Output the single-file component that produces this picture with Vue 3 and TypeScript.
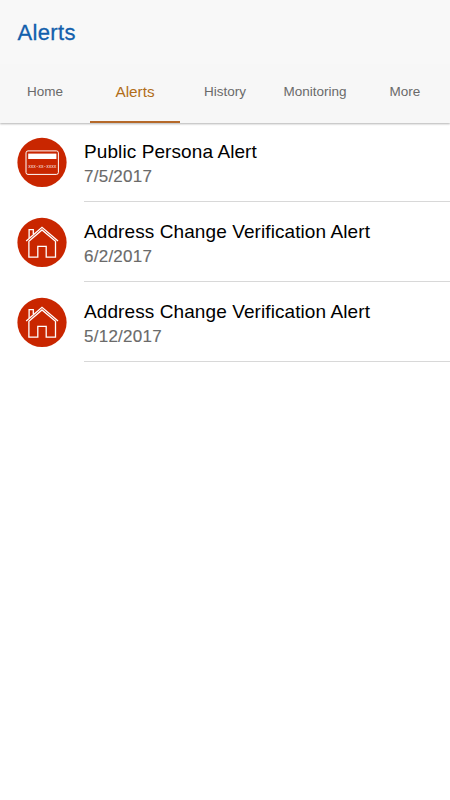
<script setup lang="ts">
interface AlertItem {
  id: number
  title: string
  date: string
  icon: 'card' | 'house'
}

const tabs: string[] = ['Home', 'Alerts', 'History', 'Monitoring', 'More']
const activeTab = 'Alerts'

const alerts: AlertItem[] = [
  { id: 1, title: 'Public Persona Alert', date: '7/5/2017', icon: 'card' },
  { id: 2, title: 'Address Change Verification Alert', date: '6/2/2017', icon: 'house' },
  { id: 3, title: 'Address Change Verification Alert', date: '5/12/2017', icon: 'house' },
]
</script>

<template>
  <div class="screen">
    <header class="header">
      <h1 class="title">Alerts</h1>
      <nav class="tabs">
        <a v-for="tab in tabs" :key="tab" class="tab" :class="{ active: tab === activeTab }">{{ tab }}</a>
      </nav>
    </header>
    <ul class="list">
      <li v-for="item in alerts" :key="item.id" class="row">
        <svg class="icon" viewBox="0 0 50 50">
          <circle cx="25" cy="25.4" r="24.6" fill="#c92600" />
          <g v-if="item.icon === 'card'">
            <rect x="9" y="13.9" width="32.4" height="23.5" rx="2" fill="none" stroke="#fff" stroke-width="1" />
            <rect x="11.2" y="16.6" width="28.2" height="5.4" fill="#fff" />
            <text x="11.2" y="30.6" class="digits" textLength="28.2" lengthAdjust="spacingAndGlyphs">xxx-xx-xxxx</text>
          </g>
          <g v-else fill="none" stroke="#fff" stroke-width="1.3">
            <path d="M9.2 24 25 10.3 41 24" />
            <path d="M12.1 20.9V12.7H16.3V17.3" />
            <path d="M11.9 24.2V40.2H20.8V29.4H29.2V40.2H38.5V24.2L25 12.9Z" />
          </g>
        </svg>
        <div class="body">
          <div class="name">{{ item.title }}</div>
          <div class="date">{{ item.date }}</div>
        </div>
      </li>
    </ul>
  </div>
</template>

<style>
body {
  background: #fff;
}
</style>

<style scoped>
.screen {
  min-height: 800px;
  background: #fff;
  font-family: 'Liberation Sans', Arial, sans-serif;
}
.header {
  height: 123px;
  box-sizing: border-box;
  background: #f7f7f7;
  box-shadow: 0 1px 2px rgba(0, 0, 0, 0.3);
  display: flex;
  flex-direction: column;
}
.title {
  margin: 0;
  padding-left: 17.5px;
  height: 64px;
  line-height: 65px;
  font-size: 22px;
  font-weight: 400;
  letter-spacing: 0.35px;
  color: #125fac;
  background: #f8f8f8;
  -webkit-text-stroke: 0.3px #125fac;
}
.tabs {
  flex: 1;
  display: grid;
  grid-template-columns: repeat(5, 1fr);
}
.tab {
  line-height: 55px;
  text-align: center;
  font-size: 13.5px;
  color: #6a6a6a;
  border-bottom: 2px solid transparent;
}
.tab.active {
  font-size: 15.3px;
  line-height: 55px;
  color: #b16d18;
  border-bottom-color: #b5692a;
}
.list {
  list-style: none;
  margin: 0;
  padding: 0;
}
.row {
  display: flex;
  height: 80px;
  padding-left: 17px;
}
.row:first-child {
  height: 79px;
}
.icon {
  width: 50px;
  height: 50px;
  margin-top: 15px;
  flex: none;
}
.row:first-child .icon {
  margin-top: 14px;
}
.digits {
  font-family: 'Liberation Mono', monospace;
  font-size: 5.4px;
  fill: #fff;
}
.body {
  flex: 1;
  margin-left: 17px;
  display: flex;
  flex-direction: column;
  justify-content: flex-end;
  border-bottom: 1px solid #d8d8d8;
}
.name {
  font-size: 19px;
  line-height: 27px;
  letter-spacing: 0.09px;
  color: #000;
}
.date {
  font-size: 17px;
  line-height: 23px;
  padding-bottom: 13px;
  letter-spacing: 0.25px;
  color: #6a6a6a;
  -webkit-text-stroke: 0.15px #6a6a6a;
}
</style>
